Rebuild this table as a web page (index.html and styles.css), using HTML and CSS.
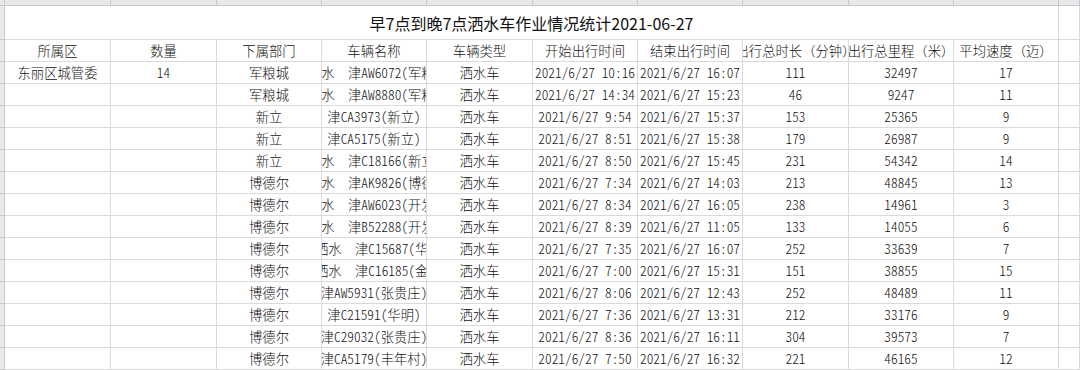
FILE: index.html
```
<!DOCTYPE html>
<html lang="zh-CN">
<head>
<meta charset="utf-8">
<title>早7点到晚7点洒水车作业情况统计</title>
<link rel="stylesheet" href="styles.css">
</head>
<body>
<div class="sheet">
  <div class="corner"></div>
  <div class="colhead"></div>
  <div class="colhead"></div>
  <div class="colhead"></div>
  <div class="colhead"></div>
  <div class="colhead"></div>
  <div class="colhead"></div>
  <div class="colhead"></div>
  <div class="colhead"></div>
  <div class="colhead"></div>
  <div class="colhead"></div>
  <div class="colhead"></div>

  <div class="rowhead"></div>
  <div class="title">早7点到晚7点洒水车作业情况统计2021-06-27</div>
  <div class="cell"></div>

  <div class="rowhead"></div>
  <div class="cell head">所属区</div>
  <div class="cell head">数量</div>
  <div class="cell head">下属部门</div>
  <div class="cell head">车辆名称</div>
  <div class="cell head">车辆类型</div>
  <div class="cell head">开始出行时间</div>
  <div class="cell head">结束出行时间</div>
  <div class="cell head">出行总时长（分钟）</div>
  <div class="cell head">出行总里程（米）</div>
  <div class="cell head">平均速度（迈）</div>
  <div class="cell"></div>

  <div class="rowhead"></div>
  <div class="cell">东丽区城管委</div><div class="cell">14</div><div class="cell">军粮城</div>
  <div class="cell lead"><span class="shift">洒水  津AW6072(军粮城)</span></div>
  <div class="cell">洒水车</div><div class="cell">2021/6/27 10:16</div><div class="cell">2021/6/27 16:07</div>
  <div class="cell">111</div><div class="cell">32497</div><div class="cell">17</div><div class="cell"></div>

  <div class="rowhead"></div>
  <div class="cell"></div><div class="cell"></div><div class="cell">军粮城</div>
  <div class="cell lead"><span class="shift">洒水  津AW8880(军粮城)</span></div>
  <div class="cell">洒水车</div><div class="cell">2021/6/27 14:34</div><div class="cell">2021/6/27 15:23</div>
  <div class="cell">46</div><div class="cell">9247</div><div class="cell">11</div><div class="cell"></div>

  <div class="rowhead"></div>
  <div class="cell"></div><div class="cell"></div><div class="cell">新立</div>
  <div class="cell">津CA3973(新立)</div>
  <div class="cell">洒水车</div><div class="cell">2021/6/27 9:54</div><div class="cell">2021/6/27 15:37</div>
  <div class="cell">153</div><div class="cell">25365</div><div class="cell">9</div><div class="cell"></div>

  <div class="rowhead"></div>
  <div class="cell"></div><div class="cell"></div><div class="cell">新立</div>
  <div class="cell">津CA5175(新立)</div>
  <div class="cell">洒水车</div><div class="cell">2021/6/27 8:51</div><div class="cell">2021/6/27 15:38</div>
  <div class="cell">179</div><div class="cell">26987</div><div class="cell">9</div><div class="cell"></div>

  <div class="rowhead"></div>
  <div class="cell"></div><div class="cell"></div><div class="cell">新立</div>
  <div class="cell lead"><span class="shift">洒水  津C18166(新立)</span></div>
  <div class="cell">洒水车</div><div class="cell">2021/6/27 8:50</div><div class="cell">2021/6/27 15:45</div>
  <div class="cell">231</div><div class="cell">54342</div><div class="cell">14</div><div class="cell"></div>

  <div class="rowhead"></div>
  <div class="cell"></div><div class="cell"></div><div class="cell">博德尔</div>
  <div class="cell lead"><span class="shift">洒水  津AK9826(博德尔)</span></div>
  <div class="cell">洒水车</div><div class="cell">2021/6/27 7:34</div><div class="cell">2021/6/27 14:03</div>
  <div class="cell">213</div><div class="cell">48845</div><div class="cell">13</div><div class="cell"></div>

  <div class="rowhead"></div>
  <div class="cell"></div><div class="cell"></div><div class="cell">博德尔</div>
  <div class="cell lead"><span class="shift">洒水  津AW6023(开发区)</span></div>
  <div class="cell">洒水车</div><div class="cell">2021/6/27 8:34</div><div class="cell">2021/6/27 16:05</div>
  <div class="cell">238</div><div class="cell">14961</div><div class="cell">3</div><div class="cell"></div>

  <div class="rowhead"></div>
  <div class="cell"></div><div class="cell"></div><div class="cell">博德尔</div>
  <div class="cell lead"><span class="shift">洒水  津B52288(开发区)</span></div>
  <div class="cell">洒水车</div><div class="cell">2021/6/27 8:39</div><div class="cell">2021/6/27 11:05</div>
  <div class="cell">133</div><div class="cell">14055</div><div class="cell">6</div><div class="cell"></div>

  <div class="rowhead"></div>
  <div class="cell"></div><div class="cell"></div><div class="cell">博德尔</div>
  <div class="cell lead"><span class="shift half">洒水  津C15687(华明)</span></div>
  <div class="cell">洒水车</div><div class="cell">2021/6/27 7:35</div><div class="cell">2021/6/27 16:07</div>
  <div class="cell">252</div><div class="cell">33639</div><div class="cell">7</div><div class="cell"></div>

  <div class="rowhead"></div>
  <div class="cell"></div><div class="cell"></div><div class="cell">博德尔</div>
  <div class="cell lead"><span class="shift half">洒水  津C16185(金桥)</span></div>
  <div class="cell">洒水车</div><div class="cell">2021/6/27 7:00</div><div class="cell">2021/6/27 15:31</div>
  <div class="cell">151</div><div class="cell">38855</div><div class="cell">15</div><div class="cell"></div>

  <div class="rowhead"></div>
  <div class="cell"></div><div class="cell"></div><div class="cell">博德尔</div>
  <div class="cell">津AW5931(张贵庄)</div>
  <div class="cell">洒水车</div><div class="cell">2021/6/27 8:06</div><div class="cell">2021/6/27 12:43</div>
  <div class="cell">252</div><div class="cell">48489</div><div class="cell">11</div><div class="cell"></div>

  <div class="rowhead"></div>
  <div class="cell"></div><div class="cell"></div><div class="cell">博德尔</div>
  <div class="cell">津C21591(华明)</div>
  <div class="cell">洒水车</div><div class="cell">2021/6/27 7:36</div><div class="cell">2021/6/27 13:31</div>
  <div class="cell">212</div><div class="cell">33176</div><div class="cell">9</div><div class="cell"></div>

  <div class="rowhead"></div>
  <div class="cell"></div><div class="cell"></div><div class="cell">博德尔</div>
  <div class="cell">津C29032(张贵庄)</div>
  <div class="cell">洒水车</div><div class="cell">2021/6/27 8:36</div><div class="cell">2021/6/27 16:11</div>
  <div class="cell">304</div><div class="cell">39573</div><div class="cell">7</div><div class="cell"></div>

  <div class="rowhead"></div>
  <div class="cell"></div><div class="cell"></div><div class="cell">博德尔</div>
  <div class="cell">津CA5179(丰年村)</div>
  <div class="cell">洒水车</div><div class="cell">2021/6/27 7:50</div><div class="cell">2021/6/27 16:32</div>
  <div class="cell">221</div><div class="cell">46165</div><div class="cell">12</div><div class="cell"></div>
</div>
</body>
</html>
```
FILE: styles.css
```
html, body {
  margin: 0;
  padding: 0;
  background: #ffffff;
}

.sheet {
  display: grid;
  grid-template-columns: 5px 106px 106px 105px 105px 106px 105px 105px 106px 105px 105px 1fr;
  grid-template-rows: 6px 34px 22px repeat(14, 22px);
  width: 1080px;
  height: 370px;
  overflow: hidden;
  font-family: "Noto Sans CJK SC", sans-serif;
  font-feature-settings: "hwid";
  font-weight: 300;
  font-size: 13.333px;
  color: #111111;
}

.corner,
.colhead,
.rowhead {
  box-sizing: border-box;
  background: #ebe8ec;
  border-right: 1px solid #cbc8cd;
  border-bottom: 1px solid #cbc8cd;
}

.cell,
.title {
  box-sizing: border-box;
  border-right: 1px solid #dadada;
  border-bottom: 1px solid #dadada;
  display: flex;
  align-items: center;
  justify-content: center;
  overflow: hidden;
  white-space: pre;
  line-height: 20px;
}

.title {
  grid-column: 2 / 12;
  font-feature-settings: normal;
  font-weight: 400;
  font-size: 16px;
  color: #111111;
}

.head {
  font-feature-settings: normal;
  font-weight: 300;
}

.lead {
  justify-content: flex-start;
}

.shift {
  margin-left: -14px;
}

.shift.half {
  margin-left: -7px;
}
```
